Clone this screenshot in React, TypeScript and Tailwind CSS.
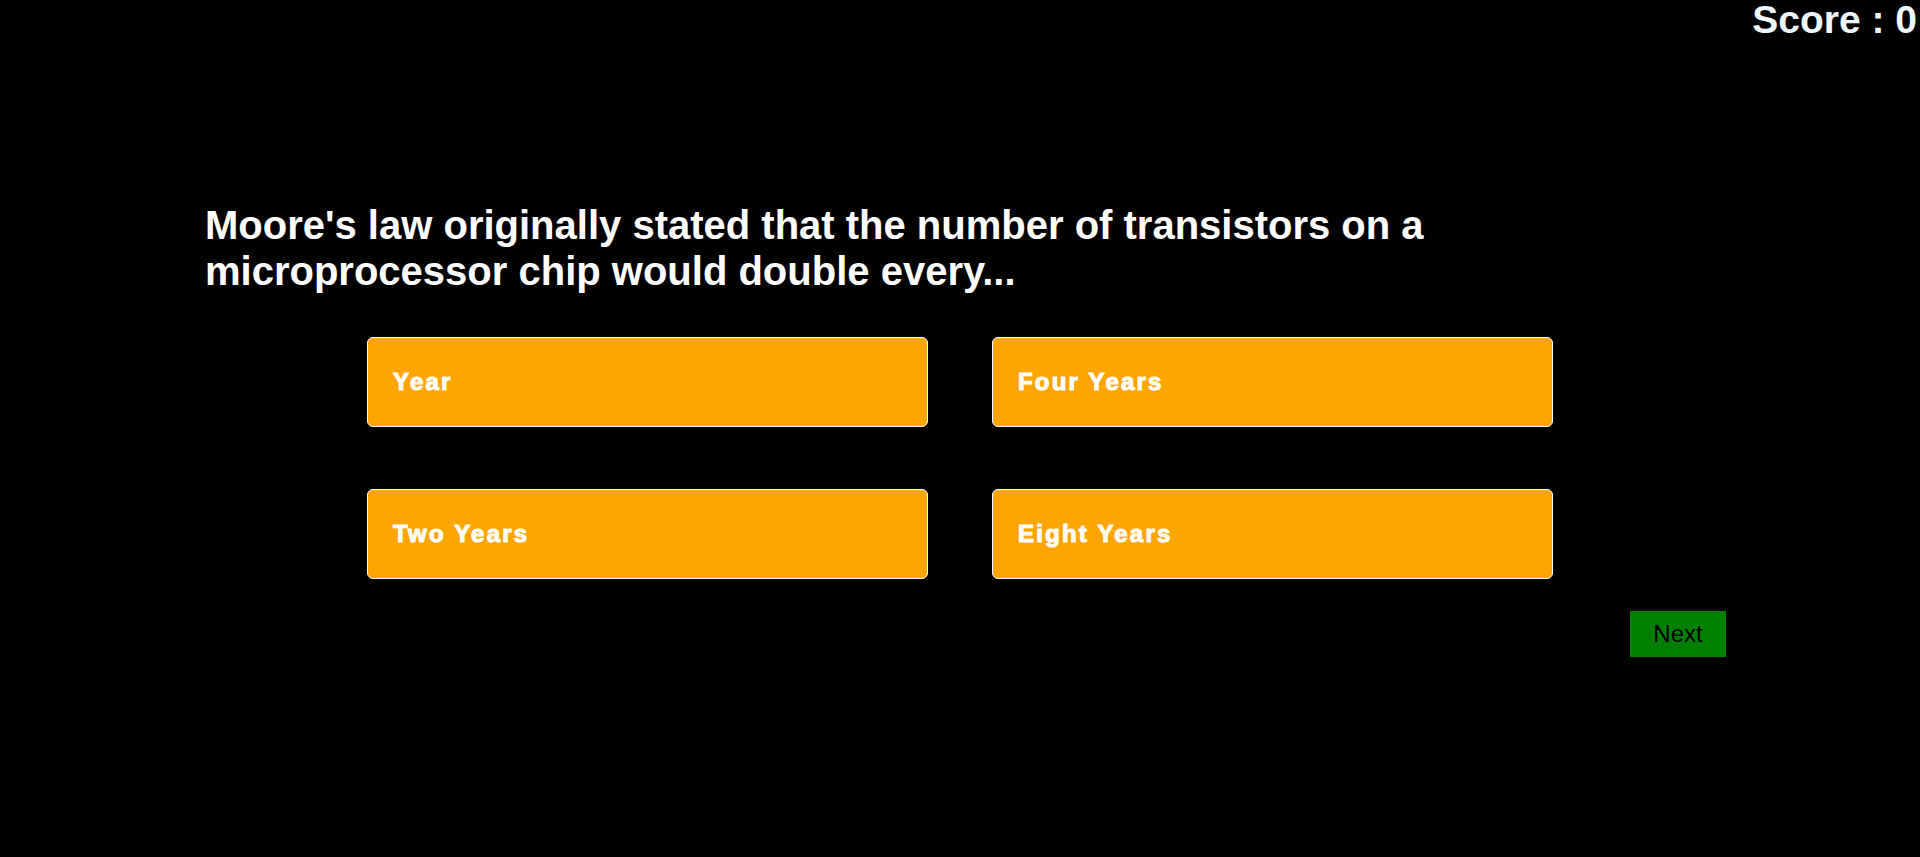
const answers = ['Year', 'Four Years', 'Two Years', 'Eight Years'];

export default function App() {
    return (
        <main className="min-h-[857px] bg-black font-['Liberation_Sans',Arial,sans-serif]">
            <header className="flex justify-end pr-[3px]">
                <span className="text-[39px] font-bold leading-[40px] text-[#f0f8ff]">Score : 0</span>
            </header>

            <section className="flex flex-col">
                <h2 className="ml-[205px] mt-[162px] w-[1300px] text-[40px] font-bold leading-[46px] text-white">
                    Moore's law originally stated that the number of transistors on a microprocessor chip would double every...
                </h2>

                <div className="mx-auto mt-[43px] grid w-[1186px] grid-cols-2 gap-x-[64px] gap-y-[62px]">
                    {answers.map((answer) => (
                        <button
                            key={answer}
                            className="flex h-[90px] items-center rounded-[6px] border border-white bg-[#ffa500] pl-[25px] text-left text-[24px] font-bold tracking-[2.2px] text-white [-webkit-text-stroke:1.1px_white]"
                        >
                            {answer}
                        </button>
                    ))}
                </div>

                <div className="mt-[32px] flex justify-end pr-[194px]">
                    <button className="h-[46px] w-[96px] bg-[#008000] text-[24px] text-black">Next</button>
                </div>
            </section>
        </main>
    );
}
